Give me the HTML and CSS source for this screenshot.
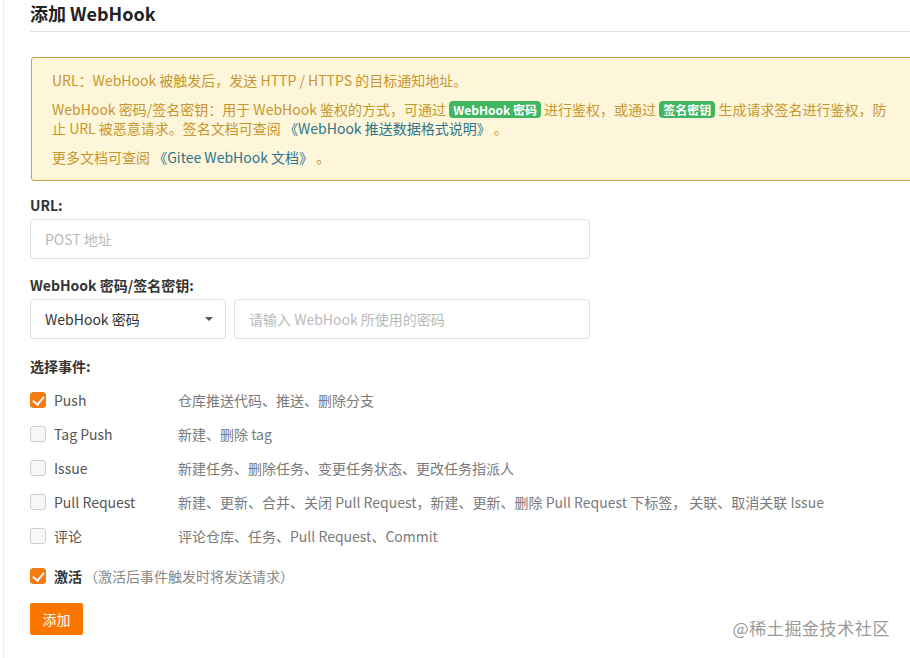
FILE: index.html
```html
<!DOCTYPE html>
<html lang="zh-CN">
<head>
<meta charset="utf-8">
<title>添加 WebHook</title>
<link rel="stylesheet" href="styles.css">
</head>
<body>
<div class="page">
  <div class="side-line"></div>
  <main class="main">
    <h2 class="title">添加 WebHook</h2>
    <div class="alert">
      <p>URL：WebHook 被触发后，发送 HTTP / HTTPS 的目标通知地址。</p>
      <p>WebHook 密码/签名密钥：用于 WebHook 鉴权的方式，可通过 <span class="badge">WebHook 密码</span> 进行鉴权，或通过 <span class="badge">签名密钥</span> 生成请求签名进行鉴权，防<br>止 URL 被恶意请求。签名文档可查阅 <a class="link">《WebHook 推送数据格式说明》</a> 。</p>
      <p>更多文档可查阅 <a class="link">《Gitee WebHook 文档》</a> 。</p>
    </div>

    <div class="field">
      <label class="label">URL:</label>
      <div class="input wide"><span class="ph">POST 地址</span></div>
    </div>

    <div class="field">
      <label class="label">WebHook 密码/签名密钥:</label>
      <div class="row">
        <div class="input select"><span>WebHook 密码</span><span class="caret"></span></div>
        <div class="input pwd"><span class="ph">请输入 WebHook 所使用的密码</span></div>
      </div>
    </div>

    <div class="field events-field">
      <label class="label">选择事件:</label>
      <ul class="events">
        <li class="event"><span class="cb checked"></span><span class="ev-name">Push</span><span class="ev-desc">仓库推送代码、推送、删除分支</span></li>
        <li class="event"><span class="cb"></span><span class="ev-name">Tag Push</span><span class="ev-desc">新建、删除 tag</span></li>
        <li class="event"><span class="cb"></span><span class="ev-name">Issue</span><span class="ev-desc">新建任务、删除任务、变更任务状态、更改任务指派人</span></li>
        <li class="event"><span class="cb"></span><span class="ev-name">Pull Request</span><span class="ev-desc">新建、更新、合并、关闭 Pull Request，新建、更新、删除 Pull Request 下标签， 关联、取消关联 Issue</span></li>
        <li class="event"><span class="cb"></span><span class="ev-name">评论</span><span class="ev-desc">评论仓库、任务、Pull Request、Commit</span></li>
      </ul>
    </div>

    <div class="activate"><span class="cb checked"></span><span class="act-name">激活</span><span class="act-hint">（激活后事件触发时将发送请求）</span></div>

    <div class="actions"><button class="btn">添加</button></div>
  </main>
  <div class="watermark">@稀土掘金技术社区</div>
</div>
</body>
</html>
```
FILE: styles.css
```css
* { box-sizing: border-box; }
html, body { margin: 0; padding: 0; background: #fff; }
body {
  font-family: "Noto Sans CJK SC", "Noto Sans", sans-serif;
  font-size: 14px;
  color: #333;
  width: 910px;
  height: 658px;
  overflow: hidden;
}
.page { position: relative; display: flex; height: 658px; }
.side-line {
  width: 4px;
  flex: none;
  border-right: 1px solid #eeeeee;
}
.main { flex: 1; padding-left: 26px; min-width: 0; }
.title {
  margin: 0;
  font-size: 18px;
  font-weight: 700;
  color: #222;
  line-height: 26px;
  padding-bottom: 5px;
  border-bottom: 1px solid #e3e3e3;
}
.alert {
  margin: 25px -20px 0 1px;
  background: #fdf6db;
  border: 1px solid #c9a13d;
  border-radius: 3px;
  padding: 13px 20px 13px 20px;
  color: #c8962c;
  line-height: 19px;
  white-space: nowrap;
}
.alert p { margin: 0 0 10px; }
.alert p:last-child { margin-bottom: 0; }
.badge {
  display: inline-block;
  background: #3fb65f;
  color: #fff;
  font-weight: 700;
  font-size: 12px;
  line-height: 17px;
  padding: 0 4px;
  border-radius: 4px;
}
.link { color: #2e7588; }
.field { margin-top: 14px; }
.label {
  display: block;
  font-weight: 700;
  color: #333;
  line-height: 20px;
  margin-bottom: 4px;
}
.field + .field { margin-top: 16px; }
.input {
  height: 40px;
  border: 1px solid #e1e1e1;
  border-radius: 4px;
  display: flex;
  align-items: center;
  padding: 0 14px;
  color: #333;
}
.wide { width: 560px; }
.ph { color: #b9b9b9; }
.row { display: flex; gap: 8px; }
.select { width: 196px; justify-content: space-between; padding-right: 12px; }
.caret {
  width: 0; height: 0;
  border-left: 4px solid transparent;
  border-right: 4px solid transparent;
  border-top: 4px solid #555;
}
.pwd { width: 356px; }
.field.events-field { margin-top: 17px; }
.events { list-style: none; margin: 7px 0 0; padding: 0; }
.event {
  display: flex;
  align-items: center;
  height: 34px;
}
.cb {
  width: 16px; height: 16px;
  flex: none;
  border: 1px solid #cfcfcf;
  border-radius: 3px;
  background: #f7f7f7;
  position: relative;
}
.cb.checked { background: #f57b10; border-color: #f57b10; }
.cb.checked::after {
  content: "";
  position: absolute;
  left: 4px; top: 1px;
  width: 5px; height: 9px;
  border: solid #fff;
  border-width: 0 2.5px 2.5px 0;
  transform: rotate(40deg);
}
.ev-name { width: 124px; margin-left: 8px; color: #555; }
.ev-desc { color: #7a7a7a; }
.activate {
  display: flex; align-items: center;
  margin-top: 13px;
  height: 20px;
}
.act-name { margin-left: 8px; font-weight: 700; color: #333; }
.act-hint { color: #888; margin-left: 2px; }
.actions { margin-top: 17px; }
.btn {
  font: inherit;
  background: #fa7600;
  color: #fff;
  border: none;
  border-radius: 2px;
  width: 53px;
  height: 32px;
  padding: 0;
  font-size: 14px;
}
.watermark {
  position: absolute;
  right: 20px;
  top: 615px;
  font-size: 17px;
  color: #9a9a9a;
  letter-spacing: 0.6px;
}
```
